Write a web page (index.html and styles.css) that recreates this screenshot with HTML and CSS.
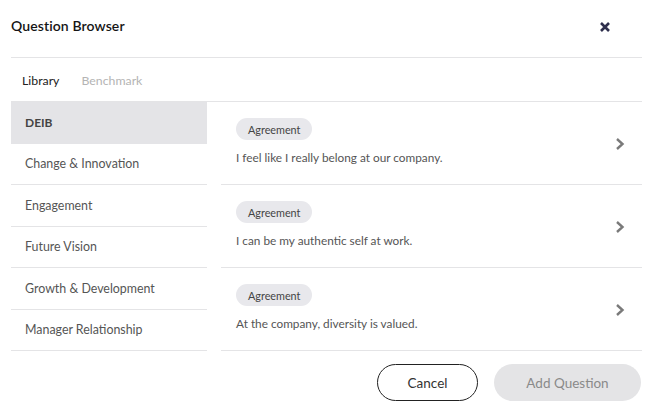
FILE: index.html
```html
<!DOCTYPE html>
<html>
<head>
<meta charset="utf-8">
<link rel="stylesheet" href="styles.css">
</head>
<body>
<div class="modal">
  <header class="header">
    <h1 class="title">Question Browser</h1>
    <button class="close" aria-label="Close">
      <svg width="12" height="12" viewBox="0 0 12 12"><path d="M2 2L10 10M10 2L2 10" stroke="#2e2f4d" stroke-width="2.6" stroke-linecap="butt"/></svg>
    </button>
  </header>
  <nav class="tabs">
    <span class="tab active">Library</span>
    <span class="tab">Benchmark</span>
  </nav>
  <div class="body">
    <ul class="cats">
      <li class="cat selected">DEIB</li>
      <li class="cat">Change &amp; Innovation</li>
      <li class="cat">Engagement</li>
      <li class="cat">Future Vision</li>
      <li class="cat">Growth &amp; Development</li>
      <li class="cat">Manager Relationship</li>
    </ul>
    <ul class="questions">
      <li class="q">
        <div class="q-main">
          <span class="badge">Agreement</span>
          <p class="q-text">I feel like I really belong at our company.</p>
        </div>
        <svg class="chev" width="10" height="14" viewBox="0 0 10 14"><path d="M2 2L7.5 7L2 12" fill="none" stroke="#7a7a7a" stroke-width="2.4"/></svg>
      </li>
      <li class="q">
        <div class="q-main">
          <span class="badge">Agreement</span>
          <p class="q-text">I can be my authentic self at work.</p>
        </div>
        <svg class="chev" width="10" height="14" viewBox="0 0 10 14"><path d="M2 2L7.5 7L2 12" fill="none" stroke="#7a7a7a" stroke-width="2.4"/></svg>
      </li>
      <li class="q">
        <div class="q-main">
          <span class="badge">Agreement</span>
          <p class="q-text">At the company, diversity is valued.</p>
        </div>
        <svg class="chev" width="10" height="14" viewBox="0 0 10 14"><path d="M2 2L7.5 7L2 12" fill="none" stroke="#7a7a7a" stroke-width="2.4"/></svg>
      </li>
    </ul>
  </div>
  <footer class="footer">
    <button class="btn btn-cancel">Cancel</button>
    <button class="btn btn-add" disabled>Add Question</button>
  </footer>
</div>
</body>
</html>
```
FILE: styles.css
```css
* { box-sizing: border-box; }
html, body { margin: 0; padding: 0; background: #fff; }
body { font-family: "Lato", "Open Sans", sans-serif; color: #333; }
.modal { width: 653px; height: 413px; padding: 0 11px; display: flex; flex-direction: column; }
.header { height: 58px; display: flex; align-items: center; justify-content: space-between; border-bottom: 1px solid #e4e4e6; padding-bottom: 6px; }
.title { margin: 0; font-size: 14px; font-weight: 600; color: #151515; letter-spacing: 0.1px; }
.close { border: 0; background: none; padding: 0; margin-right: 31px; margin-top: 2px; width: 12px; height: 12px; display: flex; }
.tabs { height: 44px; display: flex; align-items: center; gap: 22px; padding-left: 11px; padding-top: 1px; border-bottom: 1px solid #e4e4e6; }
.tab { font-size: 12.3px; color: #b4b4b4; }
.tab.active { color: #222; }
.body { display: flex; gap: 14px; }
.cats, .questions { list-style: none; margin: 0; padding: 0; }
.cats { width: 196px; }
.cat { height: 41.5px; display: flex; align-items: center; padding-left: 14px; font-size: 12.4px; color: #555; border-bottom: 1px solid #e4e4e6; }
.cat.selected { background: #e4e4e7; font-weight: 700; font-size: 12px; color: #444; border-bottom-color: transparent; }
.questions { flex: 1; }
.q { height: 83px; border-bottom: 1px solid #e4e4e6; display: flex; align-items: flex-start; justify-content: space-between; padding: 16px 17px 0 15px; }
.q-main { display: flex; flex-direction: column; align-items: flex-start; gap: 11px; }
.badge { display: inline-flex; align-items: center; height: 22px; padding: 0 12px; border-radius: 11px; background: #e8e8ec; font-size: 10.8px; color: #444; }
.q-text { margin: 0; font-size: 11.8px; line-height: 14px; color: #555; }
.chev { margin-top: 19px; }
.footer { display: flex; justify-content: flex-end; gap: 16px; padding-top: 13px; padding-right: 1px; }
.btn { height: 37px; border-radius: 19px; font-family: inherit; font-size: 13.5px; padding: 0; }
.btn-cancel { width: 101px; background: #fff; border: 1px solid #222; color: #333; }
.btn-add { width: 147px; background: #e4e4e6; border: 0; color: #8a8a8a; }
```
